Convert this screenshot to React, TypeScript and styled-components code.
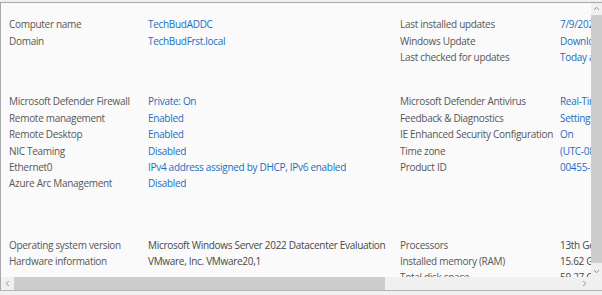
import { Fragment } from 'react';
import styled, { createGlobalStyle } from 'styled-components';

const GlobalStyle = createGlobalStyle`
  html, body {
    margin: 0;
    padding: 0;
    background: #f0f0f0;
    overflow: hidden;
  }
  body {
    font-family: 'Open Sans', 'Noto Sans', sans-serif;
  }
`;

interface Property {
  label: string;
  value: string;
  link?: boolean;
}

interface SectionData {
  left: Property[];
  right: Property[];
  spaceAfter: number;
}

const sections: SectionData[] = [
  {
    left: [
      { label: 'Computer name', value: 'TechBudADDC', link: true },
      { label: 'Domain', value: 'TechBudFrst.local', link: true },
    ],
    right: [
      { label: 'Last installed updates', value: '7/9/2023 4:12 PM', link: true },
      { label: 'Windows Update', value: 'Download updates only', link: true },
      { label: 'Last checked for updates', value: 'Today at 3:55 PM', link: true },
    ],
    spaceAfter: 28,
  },
  {
    left: [
      { label: 'Microsoft Defender Firewall', value: 'Private: On', link: true },
      { label: 'Remote management', value: 'Enabled', link: true },
      { label: 'Remote Desktop', value: 'Enabled', link: true },
      { label: 'NIC Teaming', value: 'Disabled', link: true },
      { label: 'Ethernet0', value: 'IPv4 address assigned by DHCP, IPv6 enabled', link: true },
      { label: 'Azure Arc Management', value: 'Disabled', link: true },
    ],
    right: [
      { label: 'Microsoft Defender Antivirus', value: 'Real-Time Protection: On', link: true },
      { label: 'Feedback & Diagnostics', value: 'Settings', link: true },
      { label: 'IE Enhanced Security Configuration', value: 'On', link: true },
      { label: 'Time zone', value: '(UTC-08:00) Pacific Time', link: true },
      { label: 'Product ID', value: '00455-50000-00001-AA895', link: true },
    ],
    spaceAfter: 45,
  },
  {
    left: [
      { label: 'Operating system version', value: 'Microsoft Windows Server 2022 Datacenter Evaluation' },
      { label: 'Hardware information', value: 'VMware, Inc. VMware20,1' },
    ],
    right: [
      { label: 'Processors', value: '13th Gen Intel(R) Core(TM) i7' },
      { label: 'Installed memory (RAM)', value: '15.62 GB' },
      { label: 'Total disk space', value: '59.27 GB' },
    ],
    spaceAfter: 0,
  },
];

const Frame = styled.div`
  width: 602px;
  height: 295px;
  box-sizing: border-box;
  padding-top: 2px;
  overflow: hidden;
`;

const Pane = styled.div`
  width: 602px;
  height: 289px;
  box-sizing: border-box;
  border-top: 1px solid #a9a9a9;
  border-left: 1px solid #a9a9a9;
  border-bottom: 1px solid #b4b4b4;
  display: flex;
  flex-direction: column;
  background: #fafafa;
  overflow: hidden;
`;

const MainRow = styled.div`
  flex: 1;
  min-height: 0;
  display: flex;
`;

const BottomRow = styled.div`
  flex: 0 0 13px;
  display: flex;
`;

const Viewport = styled.div`
  flex: 1;
  overflow: hidden;
  min-width: 0;
`;

const Content = styled.div`
  width: 760px;
  padding: 13px 0 0 8px;
  font-size: 10px;
  letter-spacing: -0.3px;
`;

const Section = styled.div<{ $spaceAfter: number }>`
  display: grid;
  grid-template-columns: 391px auto;
  align-items: start;
  margin-bottom: ${(p) => p.$spaceAfter}px;
`;

const PropertyList = styled.dl<{ $labelWidth: number }>`
  margin: 0;
  display: grid;
  grid-template-columns: ${(p) => p.$labelWidth}px auto;
  grid-auto-rows: 16.4px;
  align-items: center;
`;

const Label = styled.dt`
  color: #575757;
  white-space: nowrap;
`;

const Value = styled.dd<{ $link: boolean }>`
  margin: 0;
  white-space: nowrap;
  color: ${(p) => (p.$link ? '#1a6ec2' : '#474747')};
`;

const VerticalBar = styled.div`
  flex: 0 0 11px;
  background: #f0f0f0;
  display: flex;
  flex-direction: column;
`;

const HorizontalBar = styled.div`
  flex: 1;
  min-width: 0;
  background: #f0f0f0;
  display: flex;
`;

const ArrowButton = styled.div<{ $horizontal?: boolean }>`
  flex: 0 0 ${(p) => (p.$horizontal ? 13 : 11)}px;
  display: flex;
  align-items: center;
  justify-content: center;
`;

const VThumb = styled.div`
  flex: 1;
  margin: 1px 0 3px;
  background: #cdcdcd;
`;

const HThumb = styled.div`
  flex: 0 0 371px;
  background: #cdcdcd;
`;

const Track = styled.div`
  flex: 1;
`;

const Corner = styled.div`
  flex: 0 0 11px;
  background: #f0f0f0;
`;

const Chevron = ({ dir }: { dir: 'up' | 'down' | 'left' | 'right' }) => {
  const rot = { up: 0, right: 90, down: 180, left: 270 }[dir];
  return (
    <svg width="7" height="7" viewBox="0 0 7 7" style={{ transform: `rotate(${rot}deg)` }}>
      <path d="M1 4.8 L3.5 2.3 L6 4.8" fill="none" stroke="#8f8f8f" strokeWidth="1" />
    </svg>
  );
};

const PropertyColumn = ({ items, labelWidth }: { items: Property[]; labelWidth: number }) => (
  <PropertyList $labelWidth={labelWidth}>
    {items.map((item) => (
      <Fragment key={item.label}>
        <Label>{item.label}</Label>
        <Value $link={!!item.link}>{item.value}</Value>
      </Fragment>
    ))}
  </PropertyList>
);

const App = () => {
  return (
    <Frame>
      <GlobalStyle />
      <Pane>
        <MainRow>
          <Viewport>
            <Content>
              {sections.map((s, i) => (
                <Section key={i} $spaceAfter={s.spaceAfter}>
                  <PropertyColumn items={s.left} labelWidth={139} />
                  <PropertyColumn items={s.right} labelWidth={160} />
                </Section>
              ))}
            </Content>
          </Viewport>
          <VerticalBar>
            <ArrowButton>
              <Chevron dir="up" />
            </ArrowButton>
            <VThumb />
            <ArrowButton>
              <Chevron dir="down" />
            </ArrowButton>
          </VerticalBar>
        </MainRow>
        <BottomRow>
          <HorizontalBar>
            <ArrowButton $horizontal>
              <Chevron dir="left" />
            </ArrowButton>
            <HThumb />
            <Track />
            <ArrowButton $horizontal>
              <Chevron dir="right" />
            </ArrowButton>
          </HorizontalBar>
          <Corner />
        </BottomRow>
      </Pane>
    </Frame>
  );
};

export default App;
